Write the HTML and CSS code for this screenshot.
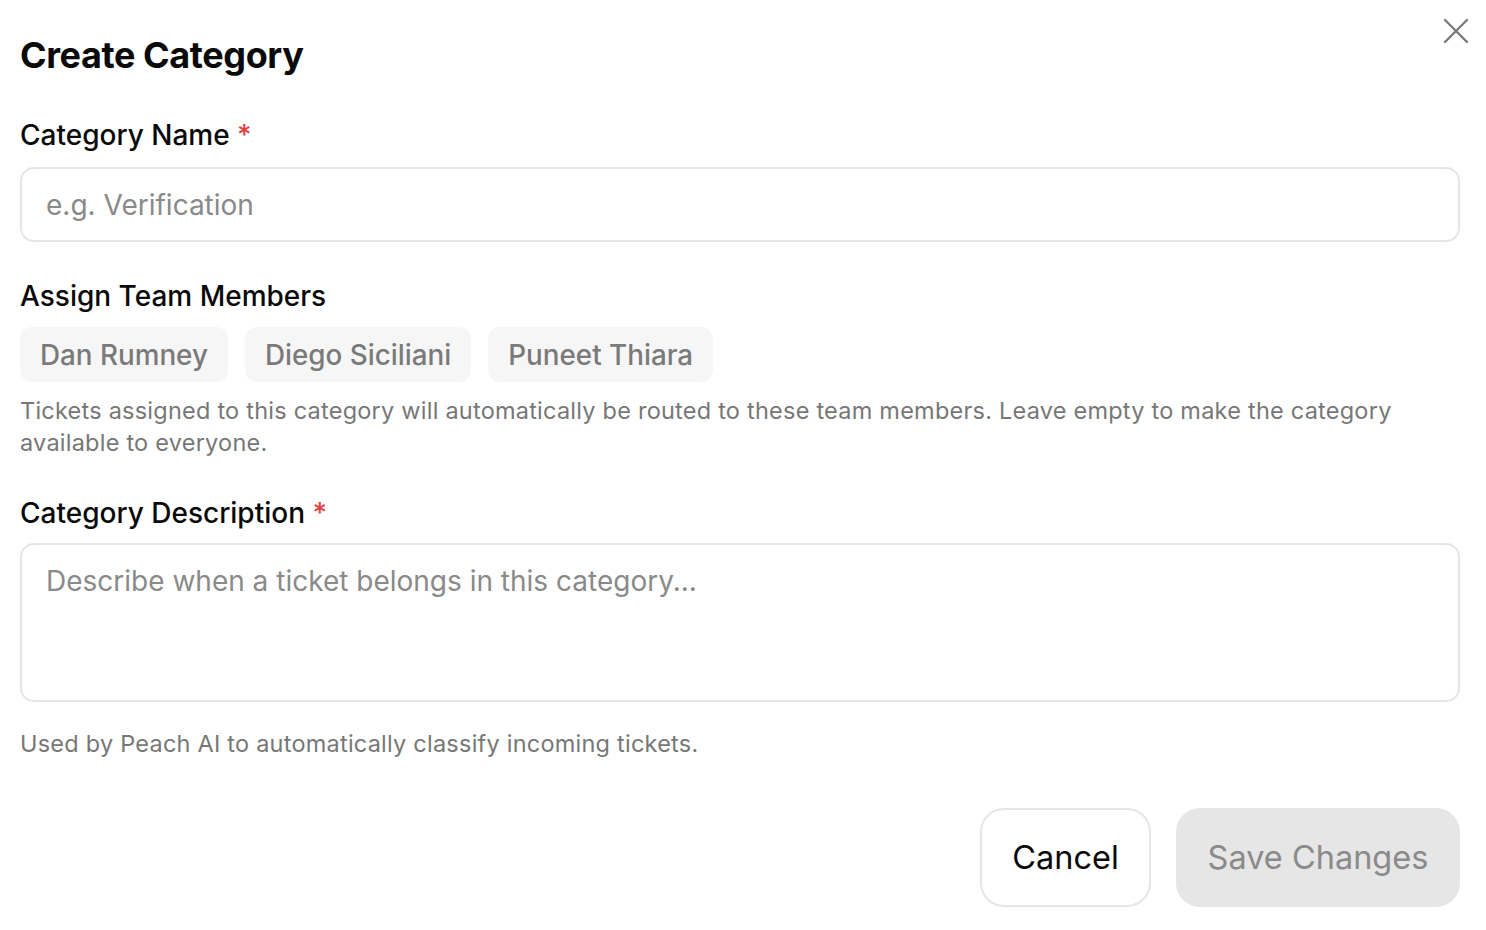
FILE: index.html
```html
<!DOCTYPE html>
<html>
<head>
<meta charset="utf-8">
<link rel="stylesheet" href="styles.css">
</head>
<body>
<div class="dialog">
  <button class="close" aria-label="Close">
    <svg width="26" height="26" viewBox="0 0 26 26"><path d="M2 2 L24 24 M24 2 L2 24" stroke="#7a7a7a" stroke-width="2.4" stroke-linecap="round" fill="none"/></svg>
  </button>
  <h1 class="title">Create Category</h1>

  <div class="field">
    <label class="label">Category Name <span class="req">*</span></label>
    <div class="input">e.g. Verification</div>
  </div>

  <div class="field field-team">
    <label class="label">Assign Team Members</label>
    <div class="chips">
      <span class="chip">Dan Rumney</span>
      <span class="chip">Diego Siciliani</span>
      <span class="chip">Puneet Thiara</span>
    </div>
    <p class="help">Tickets assigned to this category will automatically be routed to these team members. Leave empty to make the category available to everyone.</p>
  </div>

  <div class="field field-desc">
    <label class="label">Category Description <span class="req">*</span></label>
    <div class="textarea">Describe when a ticket belongs in this category...</div>
    <p class="help help-desc">Used by Peach AI to automatically classify incoming tickets.</p>
  </div>

  <div class="actions">
    <button class="btn btn-cancel">Cancel</button>
    <button class="btn btn-save">Save Changes</button>
  </div>
</div>
</body>
</html>
```
FILE: styles.css
```css
* { box-sizing: border-box; }
html, body { margin: 0; padding: 0; background: #fff; }
body { font-family: Inter, "Noto Sans", sans-serif; color: #0a0a0a; }
.dialog { position: relative; padding: 30px 26px 0 20px; width: 1486px; }
.close { position: absolute; top: 18px; right: 17px; background: none; border: 0; padding: 0; width: 26px; height: 26px; display: flex; }
.title { margin: 0; font-size: 36px; font-weight: 700; line-height: 50px; letter-spacing: -0.4px; }
.field { margin-top: 37px; display: flex; flex-direction: column; }
.label { font-size: 28px; font-weight: 500; line-height: 36px; }
.req { color: #e53e3e; }
.input { margin-top: 14px; height: 75px; border: 2px solid #e6e6e6; border-radius: 14px; padding: 0 24px; display: flex; align-items: center; font-size: 28px; color: #8a8a8a; }
.field-team { margin-top: 36px; }
.chips { display: flex; gap: 17px; margin-top: 13px; }
.chip { background: #f6f6f6; border-radius: 12px; height: 55px; padding: 0 20px; display: flex; align-items: center; font-size: 27.8px; font-weight: 500; color: #7a7a7a; }
.help { margin: 13px 0 0; font-size: 23.5px; line-height: 32px; letter-spacing: 0.23px; color: #777; }
.field-desc { margin-top: 36px; }
.textarea { margin-top: 12px; height: 159px; border: 2px solid #e6e6e6; border-radius: 14px; padding: 16px 24px; font-size: 28px; line-height: 40px; color: #8a8a8a; }
.help-desc { margin-top: 26px; }
.actions { display: flex; justify-content: flex-end; gap: 25px; margin-top: 48px; }
.btn { font-family: inherit; font-size: 32.5px; height: 99px; border-radius: 24px; padding: 0; white-space: nowrap; }
.btn-cancel { background: #fff; border: 2px solid #e6e6e6; color: #0a0a0a; width: 171px; }
.btn-save { background: #e6e6e6; border: 0; color: #8a8a8a; width: 284px; }
```
